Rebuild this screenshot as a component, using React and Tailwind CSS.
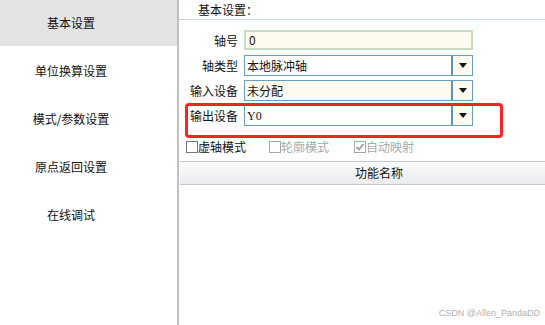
import React from 'react';

const font = { fontFamily: '"Noto Sans CJK SC", "Noto Sans", sans-serif' };

const menu = ['基本设置', '单位换算设置', '模式/参数设置', '原点返回设置', '在线调试'];

function Arrow() {
  return (
    <div className="flex h-full w-[21px] items-center justify-center border-l-2 border-[#5f94b8] bg-[#fffaee]">
      <svg width="8" height="5" viewBox="0 0 8 5">
        <path d="M0 0H8L4 5Z" fill="#111" />
      </svg>
    </div>
  );
}

function Row({ label, children }) {
  return (
    <div className="flex h-[21px] items-center">
      <div className="w-[59px] text-right text-[12px] leading-none text-[#111]">{label}</div>
      <div className="ml-[6px] h-full w-[229px]">{children}</div>
    </div>
  );
}

function Select({ value, bg, mono }) {
  return (
    <div className={`flex h-full items-center border border-[#6b9fc2] ${bg}`}>
      <div
        className={`flex-1 pl-[2px] text-[12px] leading-none text-[#111] ${mono ? "font-['Liberation_Serif',serif]" : ''}`}
      >
        {value}
      </div>
      <Arrow />
    </div>
  );
}

function Check({ label, disabled, checked }) {
  return (
    <div className="flex items-center">
      <div
        className={`flex h-[12px] w-[12px] items-center justify-center border ${
          disabled ? 'border-[#a8a8a8]' : 'border-[#777]'
        } bg-white`}
      >
        {checked && (
          <svg width="10" height="10" viewBox="0 0 10 10">
            <path d="M1.5 5L4 7.5L8.5 2" stroke="#9a9a9a" strokeWidth="1.8" fill="none" />
          </svg>
        )}
      </div>
      <span className={`text-[12px] leading-none ${disabled ? 'text-[#a9a9a9]' : 'text-[#111]'}`}>{label}</span>
    </div>
  );
}

export default function App() {
  return (
    <div className="relative flex h-[325px] w-[545px] overflow-hidden bg-white" style={font}>
      <div className="flex w-[177px] flex-col gap-[2px]">
        {menu.map((m, i) => (
          <div
            key={m}
            className={`flex h-[46px] items-center justify-center pr-[35px] text-[12px] text-[#111] ${
              i === 0 ? 'bg-[#e3e3e3]' : ''
            }`}
          >
            {m}
          </div>
        ))}
      </div>
      <div className="w-[2px] bg-[#c0c0c0]" />

      <div className="flex flex-1 flex-col">
        <div className="flex h-[20px] items-center border-b border-[#c6dcc6] pl-[19px] text-[12px] text-[#111]">
          基本设置：
        </div>

        <div className="mt-[10px] flex flex-col gap-[4px]">
          <Row label="轴号">
            <div className="flex h-[20px] items-center border-2 border-[#c6dec6] bg-[#fffaee] pl-[3px] text-[12px] leading-none text-[#111]">
              0
            </div>
          </Row>
          <Row label="轴类型">
            <Select value="本地脉冲轴" bg="bg-white" />
          </Row>
          <Row label="输入设备">
            <Select value="未分配" bg="bg-[#fffaee]" />
          </Row>
          <Row label="输出设备">
            <Select value="Y0" bg="bg-white" mono />
          </Row>
        </div>

        <div className="mt-[15px] flex items-center pl-[7px]">
          <Check label="虚轴模式" />
          <div className="ml-[23px]">
            <Check label="轮廓模式" disabled />
          </div>
          <div className="ml-[25px]">
            <Check label="自动映射" disabled checked />
          </div>
        </div>

        <div className="ml-[1px] mt-[8px] flex h-[24px] items-center border-y border-[#c3c9d1] bg-gradient-to-b from-[#fbfbfb] to-[#eaecef] pl-[175px] text-[12px] text-[#111]">
          功能名称
        </div>
      </div>

      <div className="absolute left-[185px] top-[103px] h-[35px] w-[318px] rounded-[4px] border-[3px] border-[#ff2222]" />

      <div className="absolute right-[5px] top-[307px] font-['Liberation_Sans',sans-serif] text-[9px] text-[#b0b0b0]">
        CSDN @Allen_PandaDD
      </div>
    </div>
  );
}
